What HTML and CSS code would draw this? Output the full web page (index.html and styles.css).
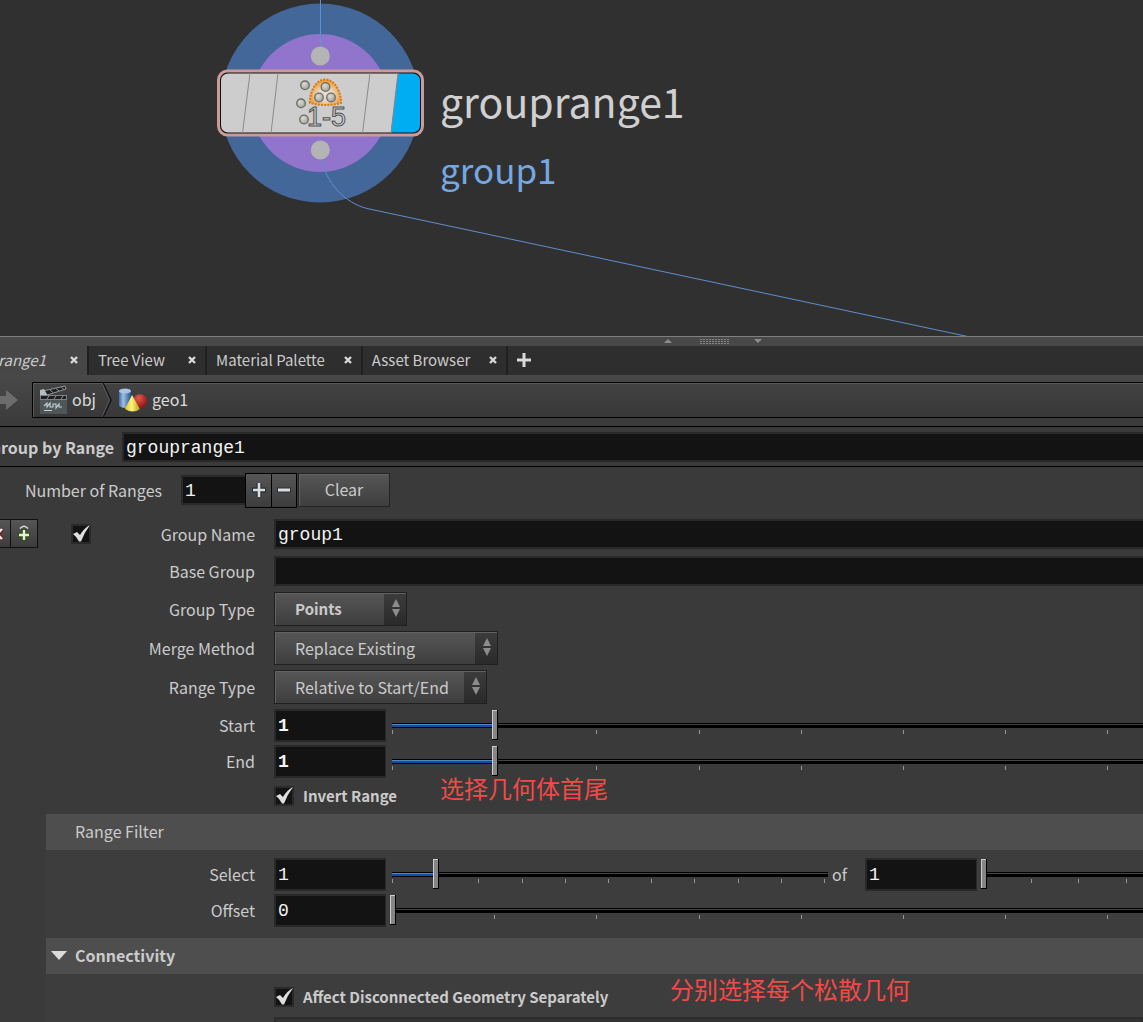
FILE: index.html
```html
<!DOCTYPE html>
<html lang="en">
<head>
<meta charset="utf-8">
<title>grouprange1</title>
<link rel="stylesheet" href="styles.css">
</head>
<body>
<svg class="defs" aria-hidden="true">
  <defs>
    <symbol id="close" viewBox="0 0 8 8"><path d="M1 1 L7 7 M7 1 L1 7" stroke="#d8d8d8" stroke-width="2.4"/></symbol>
    <symbol id="updown" viewBox="0 0 10 18"><path d="M5 0 L9 8 H1 Z M1 10 H9 L5 18 Z" fill="#8c8c8c"/></symbol>
    <symbol id="tick" viewBox="0 0 20 20"><path d="M2 10 L6 8 L9 11 Q13 4 19 1 Q13 9 10 17.500 L8 17.500 Q6 13 2 10 Z" fill="#dedede"/></symbol>
    <radialGradient id="ball" cx=".4" cy=".35" r=".7"><stop offset="0" stop-color="#dedcd2"/><stop offset="1" stop-color="#a09f95"/></radialGradient>
    <radialGradient id="glow" cy=".6"><stop offset=".45" stop-color="#e6dccd"/><stop offset="1" stop-color="#f2a243"/></radialGradient>
  </defs>
</svg>

<main class="app">
  <section class="network" aria-label="Network">
    <svg class="graph" width="1143" height="336" aria-hidden="true">
      <circle cx="320" cy="103" r="99.500" fill="#436799"/>
      <circle cx="320" cy="103" r="69" fill="#9174cb"/>
      <path d="M320.500 0 V48" stroke="#5f92d2" fill="none"/>
      <path d="M321 158 C326 183 345 203 367 208.500 L970 337" stroke="#5f8fce" fill="none"/>
      <circle cx="320.300" cy="56" r="9.500" fill="#b4b4b4"/>
      <circle cx="320.300" cy="150" r="9.500" fill="#b4b4b4"/>
      <rect x="218.500" y="71" width="204" height="64" rx="9" fill="#111" stroke="#cc9a9b" stroke-width="3"/>
      <path d="M228 73.500 H398 L391 132.500 H228 Q221 132 221 125 V81 Q221 74 228 73.500 Z" fill="#cdcdcd"/>
      <path d="M398 73.500 H413 Q420 74 420 81 V125 Q420 132 413 132.500 H391 Z" fill="#00adf2"/>
      <path d="M250 73 L242.500 133 M278 73 L271 133 M370 73 L362.500 133 M398 73 L391 133" stroke="#8b8b8b"/>
      <path d="M310 103 C309 98 313 80 325 79.500 C337 79 342 98 341 103 Q325 107 310 103 Z" fill="url(#glow)" stroke="#d87a10" stroke-width="2" stroke-dasharray="2 1.200"/>
      <g fill="url(#ball)" stroke="#686d68" stroke-width="1.300">
        <circle cx="305" cy="85.300" r="4.300"/><circle cx="301" cy="103.300" r="4.300"/><circle cx="304" cy="119.500" r="4.300"/>
        <circle cx="325.500" cy="87" r="4.300"/><circle cx="319" cy="97.500" r="4.300"/><circle cx="331" cy="97.500" r="4.300"/>
      </g>
      <text class="node-glyph" x="307" y="126">1-5</text>
    </svg>
    <span class="node-name">grouprange1</span>
    <span class="node-info">group1</span>
  </section>

  <div class="splitter" role="separator">
    <svg width="100" height="8" viewBox="0 0 100 8" aria-hidden="true">
      <path d="M1 6 L5 2 L9 6 Z M91 2 H99 L95 6 Z" fill="#8c8c8c"/>
      <path d="M37 2.500 H67 M37 4.500 H67 M37 6.500 H67" stroke="#858585" stroke-width="1" stroke-dasharray="2 1"/>
    </svg>
  </div>

  <div class="tabs">
    <div class="tab tab-active"><button class="tab-name">range1</button><button class="tab-close" aria-label="Close"><svg><use href="#close"/></svg></button></div>
    <div class="tab"><button class="tab-name">Tree View</button><button class="tab-close" aria-label="Close"><svg><use href="#close"/></svg></button></div>
    <div class="tab"><button class="tab-name">Material Palette</button><button class="tab-close" aria-label="Close"><svg><use href="#close"/></svg></button></div>
    <div class="tab"><button class="tab-name">Asset Browser</button><button class="tab-close" aria-label="Close"><svg><use href="#close"/></svg></button></div>
    <button class="tab-add" aria-label="New tab"><svg width="16" height="16" viewBox="0 0 16 16"><path d="M8 1 V15 M1 8 H15" stroke="#dadada" stroke-width="3"/></svg></button>
  </div>

  <div class="pathbar">
    <button class="forward" aria-label="Forward"><svg width="18" height="24" viewBox="0 0 18 24"><path d="M0 8 H6 V2 L18 12 L6 22 V16 H0 Z" fill="#6c6c6c"/></svg></button>
    <nav class="crumbs" aria-label="Path">
      <a class="crumb" href="#obj">
        <svg width="28" height="30" viewBox="0 0 28 30" aria-hidden="true">
          <path d="M4 6 L26 1 L27 4 L8 10 Z" fill="#1d2021" stroke="#a9afb0" stroke-width=".8"/>
          <path d="M11 5 L14 7.500 M17 3.500 L20 6 M22.500 2.500 L25 4.500" stroke="#8f9698"/>
          <path d="M1 5 L5 4 L9 11 H1 Z" fill="#b5bdc0"/>
          <rect x="1" y="10" width="27" height="19" fill="#4d575a"/>
          <rect x="1.500" y="10.500" width="26" height="4" fill="#1d2021" stroke="#8f9698" stroke-width=".8"/>
          <path d="M8 14 L10 11 M15 14 L17 11 M22 14 L24 11" stroke="#8f9698"/>
          <path d="M5 21 L8 18 V22 L11 18 V22 H14 V19 H17 V23 L20 19 V22 H23 M5 25.500 H13" stroke="#c9d0d2" stroke-width="1.100" fill="none"/>
        </svg>
        <span>obj</span>
      </a>
      <svg class="chevron" width="10" height="34" viewBox="0 0 10 34" aria-hidden="true"><path d="M1 0 L9 17 L1 34" stroke="#111" stroke-width="1.500" fill="none"/><path d="M0 0 L7.500 17 L0 34" stroke="#5c5c5c" fill="none"/></svg>
      <a class="crumb" href="#geo1">
        <svg width="29" height="26" viewBox="0 0 29 26" aria-hidden="true">
          <defs>
            <linearGradient id="cyl"><stop offset="0" stop-color="#3d6ca6"/><stop offset=".35" stop-color="#9fc0e4"/><stop offset="1" stop-color="#24508a"/></linearGradient>
            <linearGradient id="cone"><stop offset="0" stop-color="#d8c82a"/><stop offset=".45" stop-color="#fff27a"/><stop offset="1" stop-color="#b89a10"/></linearGradient>
            <radialGradient id="sph" cx=".4" cy=".3" r=".7"><stop offset="0" stop-color="#dd5c50"/><stop offset="1" stop-color="#981212"/></radialGradient>
          </defs>
          <path d="M1 4 V19 Q7 23 13 19 V4 Z" fill="url(#cyl)"/><ellipse cx="7" cy="4" rx="6" ry="2.500" fill="#a9c4e4"/>
          <circle cx="22" cy="14" r="7" fill="url(#sph)"/>
          <path d="M14 8 L22 22 Q15 27 7 22 Z" fill="url(#cone)"/>
        </svg>
        <span>geo1</span>
      </a>
    </nav>
  </div>

  <div class="opname">
    <label for="name"><span>Group by Range</span></label>
    <input class="field" id="name" type="text" value="grouprange1">
  </div>

  <form class="params">
    <div class="row row-count">
      <label class="count-label" for="count">Number of Ranges</label>
      <input class="field count" id="count" type="text" value="1">
      <div class="stepper">
        <button type="button" aria-label="Add"><svg width="14" height="18" viewBox="0 0 14 18"><path d="M7 2 V16 M0 9 H14" stroke="#27313a" stroke-width="5"/><path d="M7 2 V16 M1 9 H13" stroke="#dcdcdc" stroke-width="2.600"/></svg></button>
        <button type="button" aria-label="Remove"><svg width="14" height="18" viewBox="0 0 14 18"><path d="M0 9 H14" stroke="#27313a" stroke-width="5"/><path d="M1 9 H13" stroke="#dcdcdc" stroke-width="3"/></svg></button>
      </div>
      <button class="clear" type="button">Clear</button>
    </div>

    <div class="row">
      <div class="lead">
        <div class="instance">
          <button type="button" aria-label="Delete"><svg width="12" height="16" viewBox="0 0 12 16"><path d="M1 3 L11 13 M11 3 L1 13" stroke="#7c1818" stroke-width="5"/><path d="M1 3 L11 13 M11 3 L1 13" stroke="#eee" stroke-width="2.400"/></svg></button>
          <button type="button" aria-label="Insert before"><svg width="14" height="18" viewBox="0 0 14 18"><path d="M3 3.500 Q7 -1 11 3.500" stroke="#dcdcdc" stroke-width="1.500" fill="none"/><path d="M7 4 V16 M1 10 H13" stroke="#2f5014" stroke-width="5"/><path d="M7 5 V15 M2 10 H12" stroke="#e4eed8" stroke-width="2.400"/></svg></button>
        </div>
        <span class="check"><input type="checkbox" checked aria-label="Enable"><svg><use href="#tick"/></svg></span>
        <label class="label" for="gname">Group Name</label>
      </div>
      <input class="field" id="gname" type="text" value="group1">
    </div>
    <div class="row">
      <label class="lead" for="base">Base Group</label>
      <input class="field" id="base" type="text" value="">
    </div>
    <div class="row row-menu">
      <label class="lead" for="gtype">Group Type</label>
      <span class="menu menu-s"><select id="gtype" class="strong"><option>Points</option></select><svg><use href="#updown"/></svg></span>
    </div>
    <div class="row row-menu">
      <label class="lead" for="merge">Merge Method</label>
      <span class="menu menu-l"><select id="merge"><option>Replace Existing</option></select><svg><use href="#updown"/></svg></span>
    </div>
    <div class="row row-menu">
      <label class="lead" for="rtype">Range Type</label>
      <span class="menu menu-m"><select id="rtype"><option>Relative to Start/End</option></select><svg><use href="#updown"/></svg></span>
    </div>
    <div class="values">
      <div class="row row-num">
        <label class="lead" for="start">Start</label>
        <input class="field num strong" id="start" type="text" value="1">
        <span class="slider" style="--max:7.310;--value:1"><input type="range" min="0" max="7.310" step="0.010" value="1" aria-label="Start"></span>
      </div>
      <div class="row row-num">
        <label class="lead" for="end">End</label>
        <input class="field num strong" id="end" type="text" value="1">
        <span class="slider" style="--max:7.310;--value:1"><input type="range" min="0" max="7.310" step="0.010" value="1" aria-label="End"></span>
      </div>
      <div class="row row-check">
        <span class="lead"></span>
        <label class="toggle"><span class="check"><input type="checkbox" checked><svg><use href="#tick"/></svg></span><span>Invert Range</span></label>
        <span class="note note-ends" lang="zh">选择几何体首尾</span>
      </div>
    </div>

    <section class="group">
      <h2 class="bar">Range Filter</h2>
      <div class="group-body">
        <div class="row row-num">
          <label class="lead" for="select">Select</label>
          <input class="field num" id="select" type="text" value="1">
          <span class="slider slider-select" style="--max:10;--value:1"><input type="range" min="0" max="10" value="1" aria-label="Select"></span>
          <label class="of" for="of">of</label>
          <input class="field num" id="of" type="text" value="1">
          <span class="slider slider-of" style="--max:3.270;--value:0"><input type="range" min="0" max="3.270" step="0.010" value="0" aria-label="Of"></span>
        </div>
        <div class="row row-num">
          <label class="lead" for="offset">Offset</label>
          <input class="field num" id="offset" type="text" value="0">
          <span class="slider" style="--max:7.310;--value:0"><input type="range" min="0" max="7.310" step="0.010" value="0" aria-label="Offset"></span>
        </div>
      </div>
    </section>

    <section class="group">
      <button class="bar bar-open" type="button"><svg width="16" height="9" viewBox="0 0 16 9" aria-hidden="true"><path d="M0 0 H16 L8 9 Z" fill="#dcdcdc"/></svg>Connectivity</button>
      <div class="group-body body-conn">
        <div class="row row-check">
          <span class="lead"></span>
          <label class="toggle"><span class="check"><input type="checkbox" checked><svg><use href="#tick"/></svg></span><span>Affect Disconnected Geometry Separately</span></label>
          <span class="note note-loose" lang="zh">分别选择每个松散几何</span>
        </div>
        <div class="nextfield"></div>
      </div>
    </section>
  </form>
</main>
</body>
</html>
```
FILE: styles.css
```css
* { box-sizing: border-box; }

body {
  margin: 0;
  background: #3a3a3a;
  color: #cbcbcb;
  font: 16px/24px "Noto Sans CJK SC", "Open Sans", sans-serif;
}

button, input, select { font: inherit; color: inherit; margin: 0; }
button { padding: 0; border: 0; background: none; display: flex; align-items: center; justify-content: center; }
a { color: inherit; text-decoration: none; }
svg { display: block; flex: none; }
.defs { position: absolute; width: 0; height: 0; }
.strong { font-weight: 700; }

.app { height: 100vh; overflow: hidden; }

/* Network editor */
.network { position: relative; height: 336px; overflow: hidden; background: #303030; }
.graph { position: absolute; left: 0; top: 0; }
.node-glyph { font: 27px "Liberation Sans", sans-serif; fill: #d2d2d2; stroke: #505050; stroke-width: 1px; }
.node-name, .node-info { position: absolute; left: 440px; white-space: nowrap; line-height: 52px; }
.node-name { top: 74px; font-size: 41px; color: #d0d0d0; }
.node-info { top: 143px; font-size: 35px; color: #75a7e2; }

.splitter {
  display: flex;
  justify-content: center;
  height: 10px;
  padding-left: 282px;
  border-top: 1px solid #808080;
  background: #484848;
}

/* Pane tabs */
.tabs { display: flex; height: 29px; background: #2e2e2e; font-size: 15px; }
.tab {
  display: flex;
  align-items: center;
  justify-content: space-between;
  gap: 19px;
  min-width: 118px;
  padding: 0 9px 2px;
  border-left: 2px solid #202020;
}
.tab-active {
  width: 87px;
  min-width: 0;
  padding-left: 0;
  justify-content: flex-end;
  gap: 24px;
  border: 0;
  background: #474747;
  font-style: italic;
}
.tab-name, .tab-close { flex: none; }
.tab-close svg { width: 8px; height: 8px; }
.tab-add { padding: 0 0 2px 8px; border-left: 2px solid #202020; }

/* Path */
.pathbar {
  display: flex;
  gap: 14px;
  height: 52px;
  padding: 7px 0 8px;
  background: linear-gradient(#494949, #3a3a3a);
  border-bottom: 1px solid #000;
}
.crumbs {
  display: flex;
  flex: 1;
  border: 1px solid #000;
  border-right: 0;
  box-shadow: inset 1px 1px #5a5a5a;
  background: linear-gradient(#424242, #383838);
  color: #dcdcdc;
}
.crumb { display: flex; align-items: center; gap: 5px; padding: 0 6px; }
.crumb span { padding-bottom: 3px; }

/* Operator name */
.opname { display: flex; align-items: center; gap: 8px; height: 40px; padding-top: 1px; border-bottom: 1px solid #000; }
.opname label { display: flex; justify-content: flex-end; width: 114px; overflow: hidden; font-weight: 700; white-space: nowrap; }
.opname label span { flex: none; }

.field {
  flex: 1;
  min-width: 0;
  height: 30px;
  padding: 2px 2px 0;
  border: 2px solid #292929;
  border-right-width: 0;
  background: #131313;
  color: #f4f4f4;
  font-family: "Liberation Mono", monospace;
  font-size: 18px;
  line-height: 24px;
}

/* Parameters */
.params { display: flex; flex-direction: column; padding-top: 5px; }
.row { display: flex; align-items: center; height: 37px; }
.row-count { height: 36px; margin-bottom: 7px; }
.count-label { width: 162px; margin-right: 19px; text-align: right; }
.count { flex: 0 0 64px; }
.stepper { display: flex; border: 1px solid #000; }
.stepper button { width: 25px; height: 33px; background: linear-gradient(#565656, #3c3c3c); }
.stepper button + button { border-left: 1px solid #000; }
.clear {
  width: 92px;
  height: 34px;
  margin-left: 1px;
  padding-bottom: 2px;
  border: 1px solid #232323;
  box-shadow: inset 1px 1px #626262;
  background: linear-gradient(#565656, #3e3e3e);
}
.lead { display: flex; align-items: center; justify-content: flex-end; flex: none; width: 255px; margin-right: 19px; }
.instance { display: flex; width: 38px; justify-content: flex-end; overflow: hidden; }
.instance button { flex: none; width: 27px; height: 29px; border: 1px solid #111; border-left: 0; background: linear-gradient(#565656, #3c3c3c); }
.lead .check { margin-left: 33px; }
.label { flex: 1; text-align: right; }

.check { position: relative; flex: none; width: 20px; height: 20px; }
.check input { appearance: none; display: block; width: 20px; height: 20px; border: 2px solid #2a2a2a; background: #131313; }
.check svg { position: absolute; left: 0; top: 0; width: 20px; height: 20px; pointer-events: none; }

.row-menu { height: 39px; }
.menu { position: relative; height: 34px; }
.menu select {
  appearance: none;
  width: 100%;
  height: 34px;
  padding: 0 24px 0 20px;
  border: 1px solid #202020;
  border-radius: 0;
  box-shadow: inset 1px 1px #626262;
  background: linear-gradient(#3c3c3c, #2a2a2a) right / 22px 100% no-repeat, linear-gradient(#565656, #3e3e3e);
}
.menu .strong { font-size: 15px; }
.menu svg { position: absolute; right: 6px; top: 7px; width: 10px; height: 18px; pointer-events: none; }
.menu-s { width: 133px; }
.menu-m { width: 213px; }
.menu-l { width: 224px; }

.values { padding: 1px 0; }
.row-num { height: 36px; }
.num { flex: 0 0 112px; height: 33px; border-right-width: 1px; }

/* Slider: ticks on the wrapper, track and thumb on the input */
.slider {
  --unit: calc((100% - 6px) / var(--max));
  flex: 1;
  min-width: 0;
  height: 30px;
  margin-left: 4px;
  background: repeating-linear-gradient(90deg, #959595 0 1px, transparent 1px var(--unit)) 2px 20px / 100% 4px no-repeat;
  overflow: hidden;
}
.slider input { appearance: none; display: block; width: 100%; height: 30px; background: none; }
.slider input::-webkit-slider-runnable-track {
  height: 30px;
  background:
    linear-gradient(#000 0 1px, #5486c4 1px 2px, #0d4fa5 2px 4px, #000 4px) 2px 13px / calc(var(--unit) * var(--value)) 5px no-repeat,
    linear-gradient(#000 0 1px, #444 1px 2px, #000 2px) 2px 13px / 100% 5px no-repeat;
}
.slider input::-webkit-slider-thumb {
  appearance: none;
  width: 6px;
  height: 30px;
  border: solid #000;
  border-width: 0 1px 1px 0;
  box-shadow: inset 1px 1px #ccc;
  background: #858585;
}
.slider-select { flex: 73; }
.slider-of { flex: 27; }
.of { margin: 0 18px 0 4px; }

.row-check { position: relative; height: 34px; }
.toggle { display: flex; align-items: center; gap: 9px; font-size: 15px; font-weight: 700; }
.note { position: absolute; color: #f24a47; font-size: 24px; line-height: 32px; white-space: nowrap; }
.note-ends { left: 440px; top: -7px; }
.note-loose { left: 624px; top: -7px; }

.group { margin-left: 46px; }
.group .lead { width: 209px; }
.bar { display: flex; align-items: center; width: 100%; height: 36px; margin: 0; padding: 0 0 2px 29px; background: #4e4e4e; font-size: 16px; font-weight: 400; }
.bar-open { justify-content: flex-start; gap: 8px; padding-left: 5px; font-weight: 700; }
.group-body { padding: 6px 0 10px; background: #3d3d3d; }
.body-conn { padding: 6px 0; }
.nextfield { height: 30px; margin: 3px 0 0 228px; border: 2px solid #2c2c2c; background: #333; }
```
